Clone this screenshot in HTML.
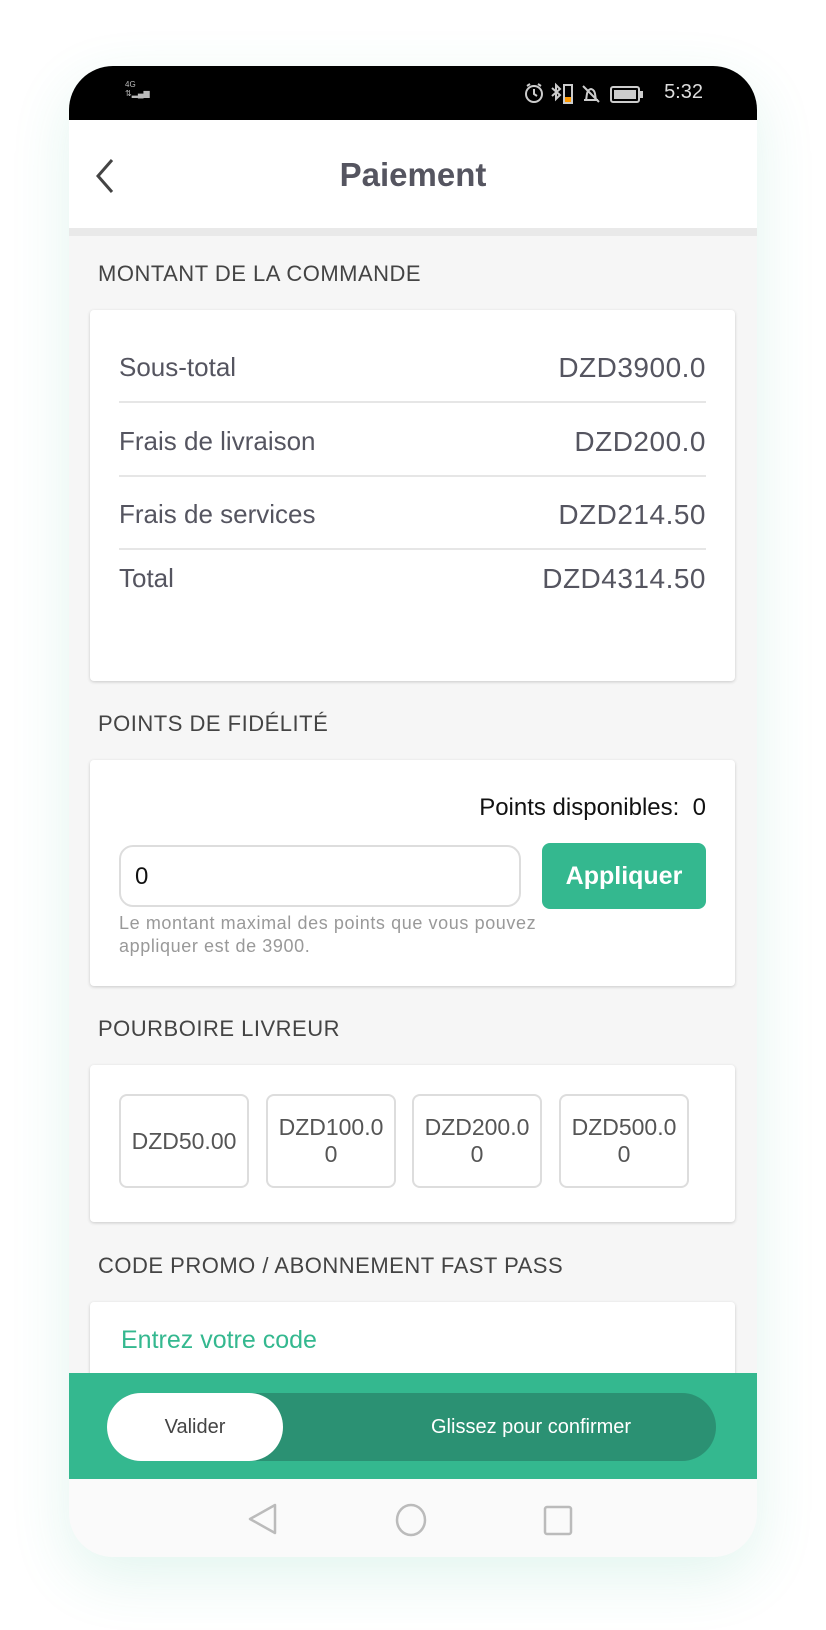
<!DOCTYPE html>
<html><head><meta charset="utf-8"><style>
*{margin:0;padding:0;box-sizing:border-box}
body{width:826px;height:1630px;background:#fff;font-family:"Liberation Sans",sans-serif;position:relative;overflow:hidden}
.phone{position:absolute;left:69px;top:66px;width:688px;height:1491px;border-radius:44px;overflow:hidden;background:#f6f6f6;box-shadow:0 20px 60px rgba(52,184,143,0.14)}
.abs{position:absolute}
.status{left:0;top:0;width:688px;height:54px;background:#000;color:#ddd}
.header{left:0;top:54px;width:688px;height:116px;background:#fff;border-bottom:8px solid #e9e9e9}
.title{color:#555560;font-weight:bold;font-size:33px;width:100%;text-align:center;top:36px}
.sec{left:29px;color:#444;font-size:22px;letter-spacing:0.5px}
.card{left:21px;width:645px;background:#fff;border-radius:4px;box-shadow:0 1px 3px rgba(0,0,0,0.18)}
.row{position:absolute;left:29px;width:587px;font-size:26px;color:#555560}
.row .r{position:absolute;right:0;top:0;font-size:28px;letter-spacing:0.5px}
.line{position:absolute;left:29px;width:587px;height:2px;background:#e6e6e6}
.tip{position:absolute;top:29px;width:130px;height:94px;border:2px solid #ddd;border-radius:8px;display:flex;align-items:center;justify-content:center;text-align:center;font-size:23px;color:#555;line-height:27px}
</style></head><body>
<div class="phone">
 <div class="abs status">
  <div class="abs" style="left:56px;top:14px;font-size:8px;color:#bbb;line-height:9px">4G<br>⇅▂▄▆</div>
  <svg class="abs" style="left:455px;top:16px" width="150" height="24" fill="none" stroke="#ccc" stroke-width="2">
   <circle cx="10" cy="12" r="8"/><path d="M10 7v5l3 2M3 4l3-2M17 4l-3-2"/>
   <path d="M28 6l8 7-4 4V3l4 4-8 7"/><rect x="40" y="3" width="8" height="18"/><rect x="41" y="15" width="6" height="5" fill="#f90" stroke="none"/>
   <path d="M60 18h14M62 18c1-3 0-10 5-11 5 1 4 8 5 11M59 4l16 16"/>
   <rect x="87" y="5" width="28" height="15" rx="2"/><rect x="90" y="8" width="22" height="9" fill="#ccc" stroke="none"/><rect x="116" y="10" width="2" height="5" fill="#ccc"/>
  </svg>
  <div class="abs" style="right:54px;top:15px;font-size:20px;color:#ddd">5:32</div>
 </div>
 <div class="abs header">
  <svg class="abs" style="left:26px;top:38px" width="20" height="36"><path d="M17 2 L3 18 L17 34" fill="none" stroke="#444" stroke-width="3"/></svg>
  <div class="abs title">Paiement</div>
 </div>
 <div class="abs sec" style="top:195px">MONTANT DE LA COMMANDE</div>
 <div class="abs card" style="top:244px;height:371px">
  <div class="row" style="top:42px">Sous-total<span class="r">DZD3900.0</span></div>
  <div class="line" style="top:91px"></div>
  <div class="row" style="top:116px">Frais de livraison<span class="r">DZD200.0</span></div>
  <div class="line" style="top:165px"></div>
  <div class="row" style="top:189px">Frais de services<span class="r">DZD214.50</span></div>
  <div class="line" style="top:238px"></div>
  <div class="row" style="top:253px">Total<span class="r">DZD4314.50</span></div>
 </div>
 <div class="abs sec" style="top:645px">POINTS DE FIDÉLITÉ</div>
 <div class="abs card" style="top:694px;height:226px">
  <div class="abs" style="right:29px;top:34px;font-size:24px;color:#111">Points disponibles:&nbsp; 0</div>
  <div class="abs" style="left:29px;top:85px;width:402px;height:62px;border:2px solid #ddd;border-radius:14px;font-size:24px;color:#111;padding:16px 14px">0</div>
  <div class="abs" style="left:452px;top:83px;width:164px;height:66px;background:#34b88f;border-radius:8px;color:#fff;font-weight:bold;font-size:25px;text-align:center;line-height:66px">Appliquer</div>
  <div class="abs" style="left:29px;top:152px;font-size:18px;color:#999;line-height:23px;letter-spacing:0.6px">Le montant maximal des points que vous pouvez<br>appliquer est de 3900.</div>
 </div>
 <div class="abs sec" style="top:950px">POURBOIRE LIVREUR</div>
 <div class="abs card" style="top:999px;height:157px">
  <div class="tip" style="left:29px">DZD50.00</div>
  <div class="tip" style="left:176px">DZD100.0<br>0</div>
  <div class="tip" style="left:322px">DZD200.0<br>0</div>
  <div class="tip" style="left:469px">DZD500.0<br>0</div>
 </div>
 <div class="abs sec" style="top:1187px">CODE PROMO / ABONNEMENT FAST PASS</div>
 <div class="abs card" style="top:1236px;height:100px">
  <div class="abs" style="left:31px;top:24px;font-size:25px;color:#34b88f">Entrez votre code</div>
 </div>
 <div class="abs" style="left:0;top:1307px;width:688px;height:106px;background:#34b88f">
  <div class="abs" style="left:38px;top:20px;width:609px;height:68px;border-radius:34px;background:#2b9173">
   <div class="abs" style="left:0;top:0;width:176px;height:68px;border-radius:34px;background:#fff;color:#444;font-size:20px;text-align:center;line-height:68px">Valider</div>
   <div class="abs" style="left:324px;top:0;line-height:68px;color:#fff;font-size:20px">Glissez pour confirmer</div>
  </div>
 </div>
 <div class="abs" style="left:0;top:1413px;width:688px;height:78px;background:#fafafa">
  <svg class="abs" style="left:0;top:0" width="688" height="78"><path d="M206 26 L181 40 L206 54 Z" fill="none" stroke="#bbb" stroke-width="2.5" stroke-linejoin="round"/><ellipse cx="342" cy="41" rx="14" ry="15" fill="none" stroke="#bbb" stroke-width="2.5"/><rect x="476" y="28" width="26" height="27" rx="2" fill="none" stroke="#bbb" stroke-width="2.5"/></svg>
 </div>
</div>
</body></html>
